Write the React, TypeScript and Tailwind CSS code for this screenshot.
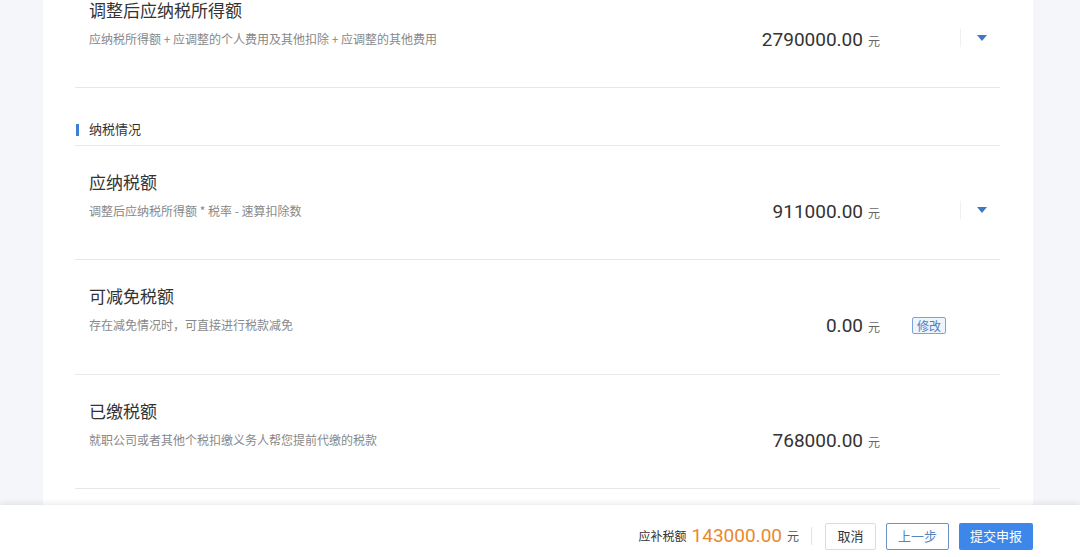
import React from "react";

const CJK = '"Noto Sans CJK SC", "Noto Sans", sans-serif';
const NUM = 'Roboto, "Noto Sans CJK SC", sans-serif';

function Triangle() {
  return (
    <svg width="12" height="8" viewBox="0 0 12 8">
      <path d="M1 1 L11 1 L6 7 Z" fill="#3f78c6" />
    </svg>
  );
}

type RowProps = {
  title: string;
  desc: string;
  amount: string;
  action?: "dropdown" | "edit" | "none";
  first?: boolean;
  tall?: boolean;
};

function Row({ title, desc, amount, action = "none", first, tall }: RowProps) {
  return (
    <div
      className={`flex shrink-0 items-start border-b border-[#e8e8e8] pl-[14px] ${tall ? "h-[115px]" : "h-[114px]"} ${first ? "mt-[-26px]" : ""}`}
    >
      <div className="flex-1 pt-[24px]">
        <div className="text-[17px] leading-[24px] text-[#333]">{title}</div>
        <div className="mt-[7px] text-[12px] leading-[20px] text-[#888]">{desc}</div>
      </div>
      <div className="flex items-baseline pt-[52px]">
        <span className="text-[19px] leading-[28px] text-[#333]" style={{ fontFamily: NUM }}>
          {amount}
        </span>
        <span className="ml-[5px] text-[12px] text-[#666]">元</span>
      </div>
      <div className="flex w-[120px] items-center pt-[55px]">
        {action === "dropdown" && (
          <div className="flex items-center">
            <div className="ml-[80px] h-[18px] w-px bg-[#f0f0f0]" />
            <div className="ml-[15px] flex">
              <Triangle />
            </div>
          </div>
        )}
        {action === "edit" && (
          <div className="ml-[32px] mt-[2px] flex h-[17px] w-[34px] items-center justify-center rounded-[2px] border border-[#7ea3d8] bg-[#eef4fc] text-[12px] text-[#4a7fc6]">
            修改
          </div>
        )}
      </div>
    </div>
  );
}

export default function App() {
  return (
    <div className="flex h-[557px] w-[1080px] flex-col overflow-hidden bg-[#f5f6f9]" style={{ fontFamily: CJK }}>
      <div className="flex-1 overflow-hidden">
        <div className="ml-[43px] flex h-full w-[990px] flex-col bg-white pl-[32px] pr-[33px]">
          <Row
            first
            title="调整后应纳税所得额"
            desc="应纳税所得额 + 应调整的个人费用及其他扣除 + 应调整的其他费用"
            amount="2790000.00"
            action="dropdown"
          />
          <div className="flex h-[58px] shrink-0 items-end border-b border-[#e8e8e8] pb-[6px]">
            <div className="mb-[3px] ml-[1px] h-[12px] w-[3px] bg-[#3d7fd6]" />
            <span className="ml-[10px] text-[13px] leading-[20px] text-[#333]">纳税情况</span>
          </div>
          <Row title="应纳税额" desc="调整后应纳税所得额 * 税率 - 速算扣除数" amount="911000.00" action="dropdown" />
          <Row tall title="可减免税额" desc="存在减免情况时，可直接进行税款减免" amount="0.00" action="edit" />
          <Row title="已缴税额" desc="就职公司或者其他个税扣缴义务人帮您提前代缴的税款" amount="768000.00" />
        </div>
      </div>
      <div className="relative flex h-[52px] shrink-0 items-center justify-end bg-white pr-[47px] pt-[10px] shadow-[0_-2px_6px_rgba(0,0,0,0.08)]">
        <span className="text-[12px] text-[#333]">应补税额</span>
        <span className="ml-[5px] text-[19px] leading-[28px] text-[#e8892f]" style={{ fontFamily: NUM }}>
          143000.00
        </span>
        <span className="ml-[5px] text-[12px] text-[#555]">元</span>
        <div className="ml-[12px] h-[18px] w-px bg-[#e4e4e4]" />
        <button className="ml-[13px] flex h-[27px] w-[51px] items-center justify-center rounded-[2px] border border-[#dcdcdc] bg-white text-[13px] text-[#333]">
          取消
        </button>
        <button className="ml-[10px] flex h-[27px] w-[63px] items-center justify-center rounded-[2px] border border-[#6b91c8] bg-white text-[13px] text-[#5a84bf]">
          上一步
        </button>
        <button className="ml-[10px] flex h-[27px] w-[74px] items-center justify-center rounded-[2px] bg-[#3d86ea] text-[13px] text-white">
          提交申报
        </button>
      </div>
    </div>
  );
}
